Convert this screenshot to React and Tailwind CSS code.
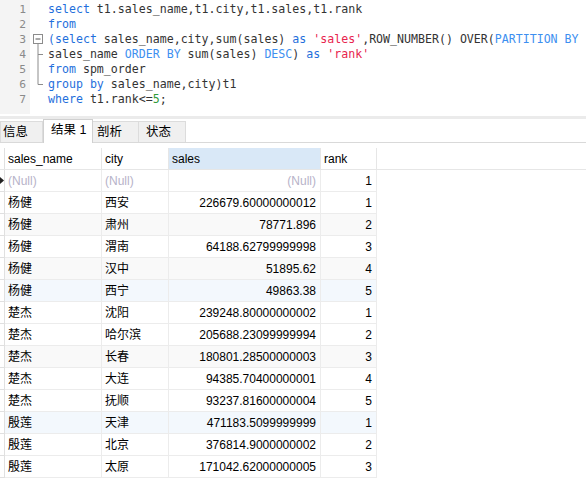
import React from 'react';

const K = 'text-[#1f6fdc]';
const K2 = 'text-[#3d8ff0]';
const S = 'text-[#e8244e]';
const N = 'text-[#2e9b3a]';
const D = 'text-[#333333]';

const code = [
  [[K, 'select'], [D, ' t1.sales_name,t1.city,t1.sales,t1.rank']],
  [[K, 'from']],
  [[K, '(select'], [D, ' sales_name,city,sum(sales) '], [K, 'as'], [D, ' '], [S, "'sales'"], [D, ',ROW_NUMBER() OVER('], [K2, 'PARTITION BY']],
  [[D, 'sales_name '], [K2, 'ORDER BY'], [D, ' sum(sales) '], [K2, 'DESC'], [D, ') '], [K, 'as'], [D, ' '], [S, "'rank'"]],
  [[K, 'from'], [D, ' spm_order']],
  [[K, 'group by'], [D, ' sales_name,city)t1']],
  [[K, 'where'], [D, ' t1.rank<='], [N, '5'], [D, ';']],
];

const rows = [
  ['(Null)', '(Null)', '(Null)', '1'],
  ['杨健', '西安', '226679.60000000012', '1'],
  ['杨健', '肃州', '78771.896', '2'],
  ['杨健', '渭南', '64188.62799999998', '3'],
  ['杨健', '汉中', '51895.62', '4'],
  ['杨健', '西宁', '49863.38', '5'],
  ['楚杰', '沈阳', '239248.80000000002', '1'],
  ['楚杰', '哈尔滨', '205688.23099999994', '2'],
  ['楚杰', '长春', '180801.28500000003', '3'],
  ['楚杰', '大连', '94385.70400000001', '4'],
  ['楚杰', '抚顺', '93237.81600000004', '5'],
  ['殷莲', '天津', '471183.5099999999', '1'],
  ['殷莲', '北京', '376814.9000000002', '2'],
  ['殷莲', '太原', '171042.62000000005', '3'],
];

function rowBg(i) {
  if (i === 5 || i === 11) return 'bg-[#f3f8fd]';
  if (i === 2 || i === 4 || i === 8) return 'bg-[#f9f9f9]';
  return 'bg-white';
}

export default function App() {
  return (
    <div
      className="w-[586px] h-[481px] bg-white overflow-hidden"
      style={{ fontFamily: '"Liberation Sans", "Noto Sans CJK SC", sans-serif' }}
    >
      {/* editor */}
      <div className="flex h-[114px]">
        <div className="w-[30px] bg-[#f4f4f4] pt-[2px] pr-[4px] text-right text-[#8a8a8a] font-['DejaVu_Sans_Mono',monospace] text-[11.3px] leading-[15px]">
          {code.map((_, i) => (
            <div key={i}>{i + 1}</div>
          ))}
        </div>
        <svg width="18" height="114" className="shrink-0">
          <rect x="3.5" y="34.5" width="9" height="9" fill="white" stroke="#8c8c8c" />
          <line x1="5.5" y1="39" x2="10.5" y2="39" stroke="#555" />
          <line x1="8" y1="44" x2="8" y2="84.5" stroke="#8c8c8c" />
          <line x1="8" y1="54.5" x2="13" y2="54.5" stroke="#8c8c8c" />
          <line x1="8" y1="84.5" x2="13" y2="84.5" stroke="#8c8c8c" />
        </svg>
        <div className="pt-[2px] font-['DejaVu_Sans_Mono',monospace] text-[11.6px] leading-[15px] whitespace-pre">
          {code.map((line, i) => (
            <div key={i}>
              {line.map(([c, t], j) => (
                <span key={j} className={c}>{t}</span>
              ))}
            </div>
          ))}
        </div>
      </div>
      <div className="h-[3px] bg-[#ebebeb] mt-[2px]" />

      {/* tabs */}
      <div className="flex items-end h-[24px] border-b border-[#d9d9d9] text-[12.5px] text-black">
        <div className="w-[43px] h-[21px] bg-[#f0f0f0] border border-b-0 border-[#dcdcdc] pl-[2px] leading-[20px]">信息</div>
        <div className="w-[50px] h-[24px] bg-white border border-b-0 border-[#d0d0d0] -mb-px pl-[7px] leading-[20px]">结果 1</div>
        <div className="w-[46px] h-[21px] bg-[#f0f0f0] border border-b-0 border-l-0 border-[#dcdcdc] pl-[4px] leading-[20px]">剖析</div>
        <div className="w-[47px] h-[21px] bg-[#f0f0f0] border border-b-0 border-l-0 border-[#dcdcdc] pl-[7px] leading-[20px]">状态</div>
      </div>

      {/* grid */}
      <div className="mt-[5px] text-[12px]">
        <div className="flex h-[22px] leading-[23px] border-b border-[#e6e6e6]">
          <div className="w-[5px] border-r border-[#e0e0e0]" />
          <div className="w-[97px] border-r border-[#e6e6e6] pl-[3px] text-black">sales_name</div>
          <div className="w-[67px] border-r border-[#e6e6e6] pl-[3px] text-black">city</div>
          <div className="w-[152px] border-r border-[#e6e6e6] pl-[3px] bg-[#d9e8f7] text-black">sales</div>
          <div className="w-[56px] border-r border-[#e6e6e6] pl-[3px] text-black">rank</div>
        </div>
        {rows.map((r, i) => {
          const nul = r[0] === '(Null)';
          const tc = nul ? 'text-[#b6b2c8]' : 'text-black';
          return (
            <div key={i} className="flex h-[22px] leading-[23px]">
              <div className="w-[5px] border-r border-b border-[#e0e0e0] relative">
                {i === 0 && (
                  <svg width="4" height="7" className="absolute left-0 top-[7px]">
                    <path d="M0 0 L4 3.5 L0 7 Z" fill="#222" />
                  </svg>
                )}
              </div>
              <div className={`w-[97px] border-r border-b border-[#ececec] pl-[3px] overflow-hidden ${rowBg(i)} ${tc}`}>{r[0]}</div>
              <div className={`w-[67px] border-r border-b border-[#ececec] pl-[3px] overflow-hidden ${rowBg(i)} ${tc}`}>{r[1]}</div>
              <div className={`w-[152px] border-r border-b border-[#ececec] pr-[4px] text-right overflow-hidden ${rowBg(i)} ${tc}`}>{r[2]}</div>
              <div className={`w-[56px] border-r border-b border-[#ececec] pr-[4px] text-right overflow-hidden ${rowBg(i)} text-black`}>{r[3]}</div>
            </div>
          );
        })}
      </div>
    </div>
  );
}
